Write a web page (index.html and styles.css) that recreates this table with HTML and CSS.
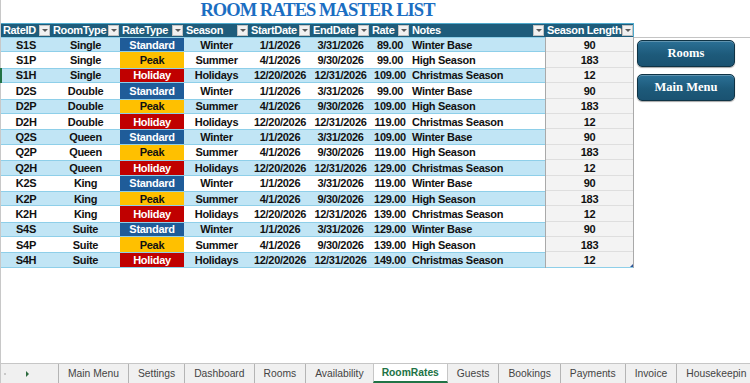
FILE: index.html
```html
<!DOCTYPE html>
<html>
<head>
<meta charset="utf-8">
<link rel="stylesheet" href="styles.css">
</head>
<body>
<div class="sheet">
  <div class="main">
    <div class="data">
      <h1 class="title">ROOM RATES MASTER LIST</h1>
      <div class="row hdr">
        <div class="h">RateID<span class="dd"></span></div>
        <div class="h">RoomType<span class="dd"></span></div>
        <div class="h">RateType<span class="dd"></span></div>
        <div class="h">Season<span class="dd"></span></div>
        <div class="h">StartDate<span class="dd"></span></div>
        <div class="h">EndDate<span class="dd"></span></div>
        <div class="h">Rate<span class="dd"></span></div>
        <div class="h">Notes<span class="dd"></span></div>
        <div class="h hlen">Season Length<span class="dd"></span></div>
      </div>
      <div class="row alt"><div class="c">S1S</div><div class="c">Single</div><div class="c std">Standard</div><div class="c">Winter</div><div class="c">1/1/2026</div><div class="c">3/31/2026</div><div class="c">89.00</div><div class="c l">Winter Base</div><div class="c len">90</div></div>
      <div class="row"><div class="c">S1P</div><div class="c">Single</div><div class="c peak">Peak</div><div class="c">Summer</div><div class="c">4/1/2026</div><div class="c">9/30/2026</div><div class="c">99.00</div><div class="c l">High Season</div><div class="c len">183</div></div>
      <div class="row alt sel"><div class="c">S1H</div><div class="c">Single</div><div class="c hol">Holiday</div><div class="c">Holidays</div><div class="c">12/20/2026</div><div class="c">12/31/2026</div><div class="c">109.00</div><div class="c l">Christmas Season</div><div class="c len">12</div></div>
      <div class="row"><div class="c">D2S</div><div class="c">Double</div><div class="c std">Standard</div><div class="c">Winter</div><div class="c">1/1/2026</div><div class="c">3/31/2026</div><div class="c">99.00</div><div class="c l">Winter Base</div><div class="c len">90</div></div>
      <div class="row alt"><div class="c">D2P</div><div class="c">Double</div><div class="c peak">Peak</div><div class="c">Summer</div><div class="c">4/1/2026</div><div class="c">9/30/2026</div><div class="c">109.00</div><div class="c l">High Season</div><div class="c len">183</div></div>
      <div class="row"><div class="c">D2H</div><div class="c">Double</div><div class="c hol">Holiday</div><div class="c">Holidays</div><div class="c">12/20/2026</div><div class="c">12/31/2026</div><div class="c">119.00</div><div class="c l">Christmas Season</div><div class="c len">12</div></div>
      <div class="row alt"><div class="c">Q2S</div><div class="c">Queen</div><div class="c std">Standard</div><div class="c">Winter</div><div class="c">1/1/2026</div><div class="c">3/31/2026</div><div class="c">109.00</div><div class="c l">Winter Base</div><div class="c len">90</div></div>
      <div class="row"><div class="c">Q2P</div><div class="c">Queen</div><div class="c peak">Peak</div><div class="c">Summer</div><div class="c">4/1/2026</div><div class="c">9/30/2026</div><div class="c">119.00</div><div class="c l">High Season</div><div class="c len">183</div></div>
      <div class="row alt"><div class="c">Q2H</div><div class="c">Queen</div><div class="c hol">Holiday</div><div class="c">Holidays</div><div class="c">12/20/2026</div><div class="c">12/31/2026</div><div class="c">129.00</div><div class="c l">Christmas Season</div><div class="c len">12</div></div>
      <div class="row"><div class="c">K2S</div><div class="c">King</div><div class="c std">Standard</div><div class="c">Winter</div><div class="c">1/1/2026</div><div class="c">3/31/2026</div><div class="c">119.00</div><div class="c l">Winter Base</div><div class="c len">90</div></div>
      <div class="row alt"><div class="c">K2P</div><div class="c">King</div><div class="c peak">Peak</div><div class="c">Summer</div><div class="c">4/1/2026</div><div class="c">9/30/2026</div><div class="c">129.00</div><div class="c l">High Season</div><div class="c len">183</div></div>
      <div class="row"><div class="c">K2H</div><div class="c">King</div><div class="c hol">Holiday</div><div class="c">Holidays</div><div class="c">12/20/2026</div><div class="c">12/31/2026</div><div class="c">139.00</div><div class="c l">Christmas Season</div><div class="c len">12</div></div>
      <div class="row alt"><div class="c">S4S</div><div class="c">Suite</div><div class="c std">Standard</div><div class="c">Winter</div><div class="c">1/1/2026</div><div class="c">3/31/2026</div><div class="c">129.00</div><div class="c l">Winter Base</div><div class="c len">90</div></div>
      <div class="row"><div class="c">S4P</div><div class="c">Suite</div><div class="c peak">Peak</div><div class="c">Summer</div><div class="c">4/1/2026</div><div class="c">9/30/2026</div><div class="c">139.00</div><div class="c l">High Season</div><div class="c len">183</div></div>
      <div class="row alt last"><div class="c">S4H</div><div class="c">Suite</div><div class="c hol">Holiday</div><div class="c">Holidays</div><div class="c">12/20/2026</div><div class="c">12/31/2026</div><div class="c">149.00</div><div class="c l">Christmas Season</div><div class="c len">12</div></div>
    </div>
    <div class="side">
      <div class="freeze"></div>
      <div class="btn">Rooms</div>
      <div class="btn">Main Menu</div>
    </div>
  </div>
  <div class="tabs">
    <div class="nav"><span class="prev"></span><span class="next"></span></div>
    <div class="tab">Main Menu</div>
    <div class="tab">Settings</div>
    <div class="tab">Dashboard</div>
    <div class="tab">Rooms</div>
    <div class="tab">Availability</div>
    <div class="tab active">RoomRates</div>
    <div class="tab">Guests</div>
    <div class="tab">Bookings</div>
    <div class="tab">Payments</div>
    <div class="tab">Invoice</div>
    <div class="tab">Housekeepin</div>
  </div>
</div>
</body>
</html>
```
FILE: styles.css
```css
* { box-sizing: border-box; }
html, body { margin: 0; padding: 0; }
body {
  width: 750px;
  height: 383px;
  overflow: hidden;
  background: #fff;
  font-family: "Liberation Sans", Arial, sans-serif;
}
.sheet {
  display: flex;
  flex-direction: column;
  height: 383px;
  border-left: 1px solid #c8c8c8;
}
.main { flex: 1; display: flex; min-height: 0; }
.data { width: 633px; flex: none; }
.title {
  margin: 0;
  height: 23px;
  text-align: center;
  font-family: "Liberation Serif", "Times New Roman", serif;
  font-weight: 700;
  font-size: 18.5px;
  letter-spacing: -0.95px;
  line-height: 21px;
  color: #1b6ec2;
}
.row {
  display: grid;
  grid-template-columns: 50px 69px 64px 65px 62px 59px 40px 135px 89px;
  height: 15.4px;
  position: relative;
}
.row.hdr { height: 14px; }
.h {
  background: #1e5c7b;
  color: #fff;
  font-weight: 700;
  font-size: 11px;
  letter-spacing: -0.35px;
  display: flex;
  align-items: center;
  justify-content: space-between;
  padding: 0 1px 0 2px;
  white-space: nowrap;
  overflow: hidden;
  box-shadow: inset 0 1px 0 #4ea9cc;
}
.h.hlen { box-shadow: inset 0 1px 0 #4ea9cc, inset -1px 0 0 #4ea9cc; padding-right: 2px; }
.dd {
  width: 11px;
  height: 11px;
  flex: none;
  margin-left: 1px;
  background: #f1f1f1;
  border: 1px solid #c2c2c2;
  display: flex;
  align-items: center;
  justify-content: center;
}
.dd::after {
  content: "";
  border-left: 3px solid transparent;
  border-right: 3px solid transparent;
  border-top: 3px solid #5a5a5a;
}
.c {
  display: flex;
  align-items: center;
  justify-content: center;
  font-weight: 700;
  font-size: 11px;
  letter-spacing: -0.3px;
  color: #111;
  white-space: nowrap;
  overflow: hidden;
}
.c.l { justify-content: flex-start; padding-left: 2px; }
.row.alt .c { background: #c1e5f5; box-shadow: inset 0 1px 0 #8ecfe9, inset 0 -1px 0 #8ecfe9; }
.row .c.std { background: #1f5c99; color: #fff; }
.row .c.peak { background: #ffc000; color: #111; }
.row .c.hol { background: #c00000; color: #fff; }
.row .c.len {
  background: #f3f3f3;
  border-left: 1px solid #a9a9a9;
  border-right: 1px solid #a9a9a9;
  box-shadow: inset 0 -1px 0 #dedede;
}
.row.last .c.len { box-shadow: inset 0 -1px 0 #8ecfe9; position: relative; }
.row.last .c.len::after {
  content: "";
  position: absolute;
  right: 0;
  bottom: 1px;
  border-left: 3px solid transparent;
  border-bottom: 3px solid #2f5597;
}
.row.sel::before {
  content: "";
  position: absolute;
  left: -1px;
  top: 0;
  bottom: 0;
  width: 2px;
  background: #217346;
}
.side { flex: 1; }
.freeze { height: 38px; border-bottom: 1px solid #c4c4c4; }
.btn {
  width: 98px;
  height: 27px;
  margin: 2px 0 0 3px;
  display: flex;
  align-items: center;
  justify-content: center;
  background: linear-gradient(#2b7096, #1d5a7a 55%, #1a5271);
  border: 1px solid #0f3345;
  border-radius: 5px;
  box-shadow: inset 0 1px 0 rgba(255,255,255,0.25), 0 1px 1px rgba(0,0,0,0.35);
  color: #fff;
  font-family: "Liberation Serif", "Times New Roman", serif;
  font-weight: 700;
  font-size: 12.5px;
}
.btn + .btn { margin-top: 7px; }
.tabs {
  height: 20px;
  flex: none;
  display: flex;
  background: #f0f0f0;
  border-top: 1px solid #c6c6c6;
  font-family: "Liberation Sans", Arial, sans-serif;
  font-size: 10.3px;
  color: #444;
  white-space: nowrap;
  overflow: hidden;
}
.nav { width: 57px; flex: none; display: flex; align-items: center; }
.prev {
  margin-left: 3px;
  width: 2px; height: 2px;
  background: #c8c8c8;
}
.next {
  margin-left: 20px;
  border-top: 3px solid transparent;
  border-bottom: 3px solid transparent;
  border-left: 3px solid #2d6b3f;
}
.tab {
  display: flex;
  align-items: center;
  padding: 0 9px;
  border-left: 1px solid #b4b4b4;
  flex: none;
}
.tab.active {
  background: #fff;
  color: #217346;
  font-weight: 700;
  margin-top: -1px;
  padding: 0 8px;
  border-bottom: 2px solid #217346;
  border-left: 1px solid #c6c6c6;
  border-right: 1px solid #c6c6c6;
}
.tab.active + .tab { border-left: none; }
```
